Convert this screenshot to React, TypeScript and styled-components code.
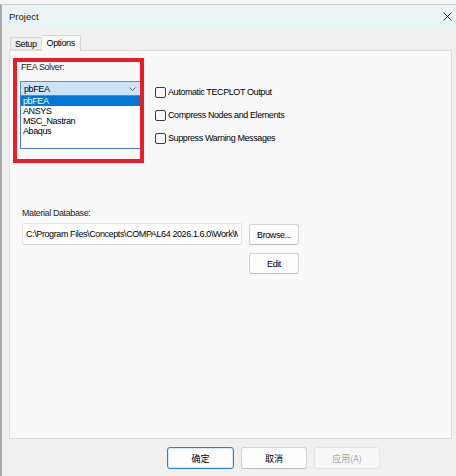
import React from "react";
import styled, { createGlobalStyle } from "styled-components";

const GlobalStyle = createGlobalStyle`
  html, body { margin: 0; padding: 0; }
  body {
    background: #f4f4f4;
    font-family: "Liberation Sans", Arial, "Noto Sans CJK SC", sans-serif;
    font-size: 9px;
    letter-spacing: -0.4px;
    color: #000;
  }
  * { box-sizing: border-box; }
`;

const Desktop = styled.div`
  width: 456px;
  height: 476px;
  overflow: hidden;
  padding-top: 4px;
  background: #f4f4f4;
`;

const Window = styled.div`
  height: 100%;
  display: flex;
  flex-direction: column;
  border-left: 2px solid #aaaaaa;
  border-top: 1px solid #cfcfcf;
  background: #f0f0f0;
`;

const TitleBar = styled.div`
  height: 22px;
  flex: none;
  display: flex;
  align-items: center;
  justify-content: space-between;
  padding: 0 4px 0 7px;
  background: #e9f4f7;
`;

const Title = styled.span`
  font-size: 9.5px;
  letter-spacing: 0;
  color: #1a1a1a;
`;

const CloseButton = styled.button`
  display: flex;
  align-items: center;
  justify-content: center;
  width: 9px;
  height: 9px;
  padding: 0;
  border: none;
  background: transparent;
`;

const Body = styled.div`
  flex: 1;
  display: flex;
  flex-direction: column;
  padding: 8px 4px 0 7px;
`;

const TabStrip = styled.div`
  display: flex;
  align-items: flex-end;
  height: 15px;
  padding-left: 1px;
`;

const Tab = styled.div<{ $active?: boolean }>`
  display: flex;
  align-items: center;
  justify-content: center;
  height: ${(p) => (p.$active ? "16px" : "13px")};
  padding: ${(p) => (p.$active ? "0 5px 1px" : "0 4px")};
  margin-bottom: ${(p) => (p.$active ? "-1px" : "0")};
  border: 1px solid #d9d9d9;
  border-bottom: ${(p) => (p.$active ? "none" : "1px solid #d9d9d9")};
  border-left: ${(p) => (p.$active ? "none" : "1px solid #d9d9d9")};
  background: ${(p) => (p.$active ? "#f9f9f9" : "#f0f0f0")};
  position: relative;
  z-index: ${(p) => (p.$active ? 1 : 0)};
  color: #000;
`;

const Page = styled.div`
  position: relative;
  height: 389px;
  flex: none;
  background: #f9f9f9;
  border: 1px solid #dcdcdc;
`;

const TopRow = styled.div`
  display: flex;
  gap: 13px;
  padding: 11px 0 0 10px;
`;

const SolverGroup = styled.div`
  display: flex;
  flex-direction: column;
  width: 122px;
`;

const FieldLabel = styled.div<{ $indent?: number }>`
  line-height: 11px;
  height: 11px;
  margin-left: ${(p) => p.$indent ?? 0}px;
  color: #1e1e1e;
`;

const Combo = styled.div`
  margin-top: 8px;
  height: 15px;
  display: flex;
  align-items: center;
  justify-content: space-between;
  padding: 0 5px 0 3px;
  background: #cce4f7;
  border: 1px solid #4a8fd0;
`;

const DropList = styled.ul`
  list-style: none;
  margin: 0;
  padding: 0;
  height: 53px;
  background: #fff;
  border: 1px solid #3f7fbf;
  border-top: none;
`;

const DropItem = styled.li<{ $selected?: boolean }>`
  height: 10px;
  line-height: 10px;
  padding-left: 2px;
  background: ${(p) => (p.$selected ? "#0078d7" : "transparent")};
  color: ${(p) => (p.$selected ? "#fff" : "#000")};
`;

const OptionList = styled.div`
  display: flex;
  flex-direction: column;
  gap: 9px;
  margin-top: 23px;
`;

const CheckRow = styled.label`
  display: flex;
  align-items: center;
  gap: 2px;
  height: 14px;
`;

const CheckBox = styled.span`
  width: 11px;
  height: 11px;
  border: 1px solid #3c3c3c;
  border-radius: 2px;
  background: #f7f7f7;
`;

const DatabaseSection = styled.div`
  display: flex;
  flex-direction: column;
  margin-top: 59px;
  padding-left: 12px;
`;

const PathRow = styled.div`
  display: flex;
  align-items: flex-start;
  gap: 7px;
  margin-top: 4px;
`;

const PathInput = styled.input`
  width: 220px;
  height: 22px;
  padding: 0 3px;
  margin: 0;
  border: 1px solid #e3e3e3;
  border-bottom-color: #d0d0d0;
  border-radius: 2px;
  background: #fff;
  font: inherit;
  letter-spacing: inherit;
  color: #000;
  outline: none;
  overflow: hidden;
`;

const SideButtons = styled.div`
  display: flex;
  flex-direction: column;
  gap: 8px;
  margin-top: 1px;
`;

const PushButton = styled.button<{ $width?: number; $primary?: boolean }>`
  width: ${(p) => p.$width ?? 50}px;
  height: ${(p) => (p.$primary !== undefined ? 22 : 21)}px;
  padding: 0;
  font: inherit;
  letter-spacing: inherit;
  color: #000;
  background: #fdfdfd;
  border: 1px solid ${(p) => (p.$primary ? "#2f7fd0" : "#d3d3d3")};
  border-bottom-color: ${(p) => (p.$primary ? "#2f7fd0" : "#bcbcbc")};
  border-radius: 3px;
  box-shadow: ${(p) => (p.$primary ? "inset 0 0 0 1px #d6e8f8" : "none")};
  &:disabled {
    color: #a3a3a3;
    background: #f7f7f7;
    border-color: #e4e4e4;
  }
`;

const Footer = styled.div`
  flex: 1;
  display: flex;
  justify-content: flex-end;
  align-items: flex-start;
  gap: 7px;
  padding: 8px 72px 0 0;
  font-family: "Noto Sans CJK SC", "Liberation Sans", sans-serif;
  letter-spacing: 0;
`;

/* red annotation frame drawn over the solver selector */
const Callout = styled.div`
  position: absolute;
  left: 3px;
  top: 7px;
  width: 131px;
  height: 105px;
  border: 4px solid #ec1c24;
  pointer-events: none;
`;

const solvers = ["pbFEA", "ANSYS", "MSC_Nastran", "Abaqus"];
const options = [
  "Automatic TECPLOT Output",
  "Compress Nodes and Elements",
  "Suppress Warning Messages",
];

export default function App() {
  return (
    <>
      <GlobalStyle />
      <Desktop>
        <Window>
          <TitleBar>
            <Title>Project</Title>
            <CloseButton aria-label="Close">
              <svg width="9" height="9" viewBox="0 0 9 9">
                <path d="M0.5 0.5L8.5 8.5M8.5 0.5L0.5 8.5" stroke="#2b2b2b" strokeWidth="1" />
              </svg>
            </CloseButton>
          </TitleBar>
          <Body>
            <TabStrip>
              <Tab>Setup</Tab>
              <Tab $active>Options</Tab>
            </TabStrip>
            <Page>
              <TopRow>
                <SolverGroup>
                  <FieldLabel $indent={1}>FEA Solver:</FieldLabel>
                  <Combo>
                    <span>pbFEA</span>
                    <svg width="7" height="4" viewBox="0 0 7 4">
                      <path d="M0.5 0.5L3.5 3.5L6.5 0.5" fill="none" stroke="#555" strokeWidth="0.9" />
                    </svg>
                  </Combo>
                  <DropList>
                    {solvers.map((s, i) => (
                      <DropItem key={s} $selected={i === 0}>
                        {s}
                      </DropItem>
                    ))}
                  </DropList>
                </SolverGroup>
                <OptionList>
                  {options.map((o) => (
                    <CheckRow key={o}>
                      <CheckBox />
                      <span>{o}</span>
                    </CheckRow>
                  ))}
                </OptionList>
              </TopRow>
              <DatabaseSection>
                <FieldLabel>Material Database:</FieldLabel>
                <PathRow>
                  <PathInput
                    readOnly
                    value={"C:\\Program Files\\Concepts\\COMPAL64 2026.1.6.0\\Work\\Materials.mdb"}
                  />
                  <SideButtons>
                    <PushButton>Browse...</PushButton>
                    <PushButton>Edit</PushButton>
                  </SideButtons>
                </PathRow>
              </DatabaseSection>
              <Callout />
            </Page>
            <Footer>
              <PushButton $width={67} $primary>确定</PushButton>
              <PushButton $width={66} $primary={false}>取消</PushButton>
              <PushButton $width={66} $primary={false} disabled>
                应用(A)
              </PushButton>
            </Footer>
          </Body>
        </Window>
      </Desktop>
    </>
  );
}
